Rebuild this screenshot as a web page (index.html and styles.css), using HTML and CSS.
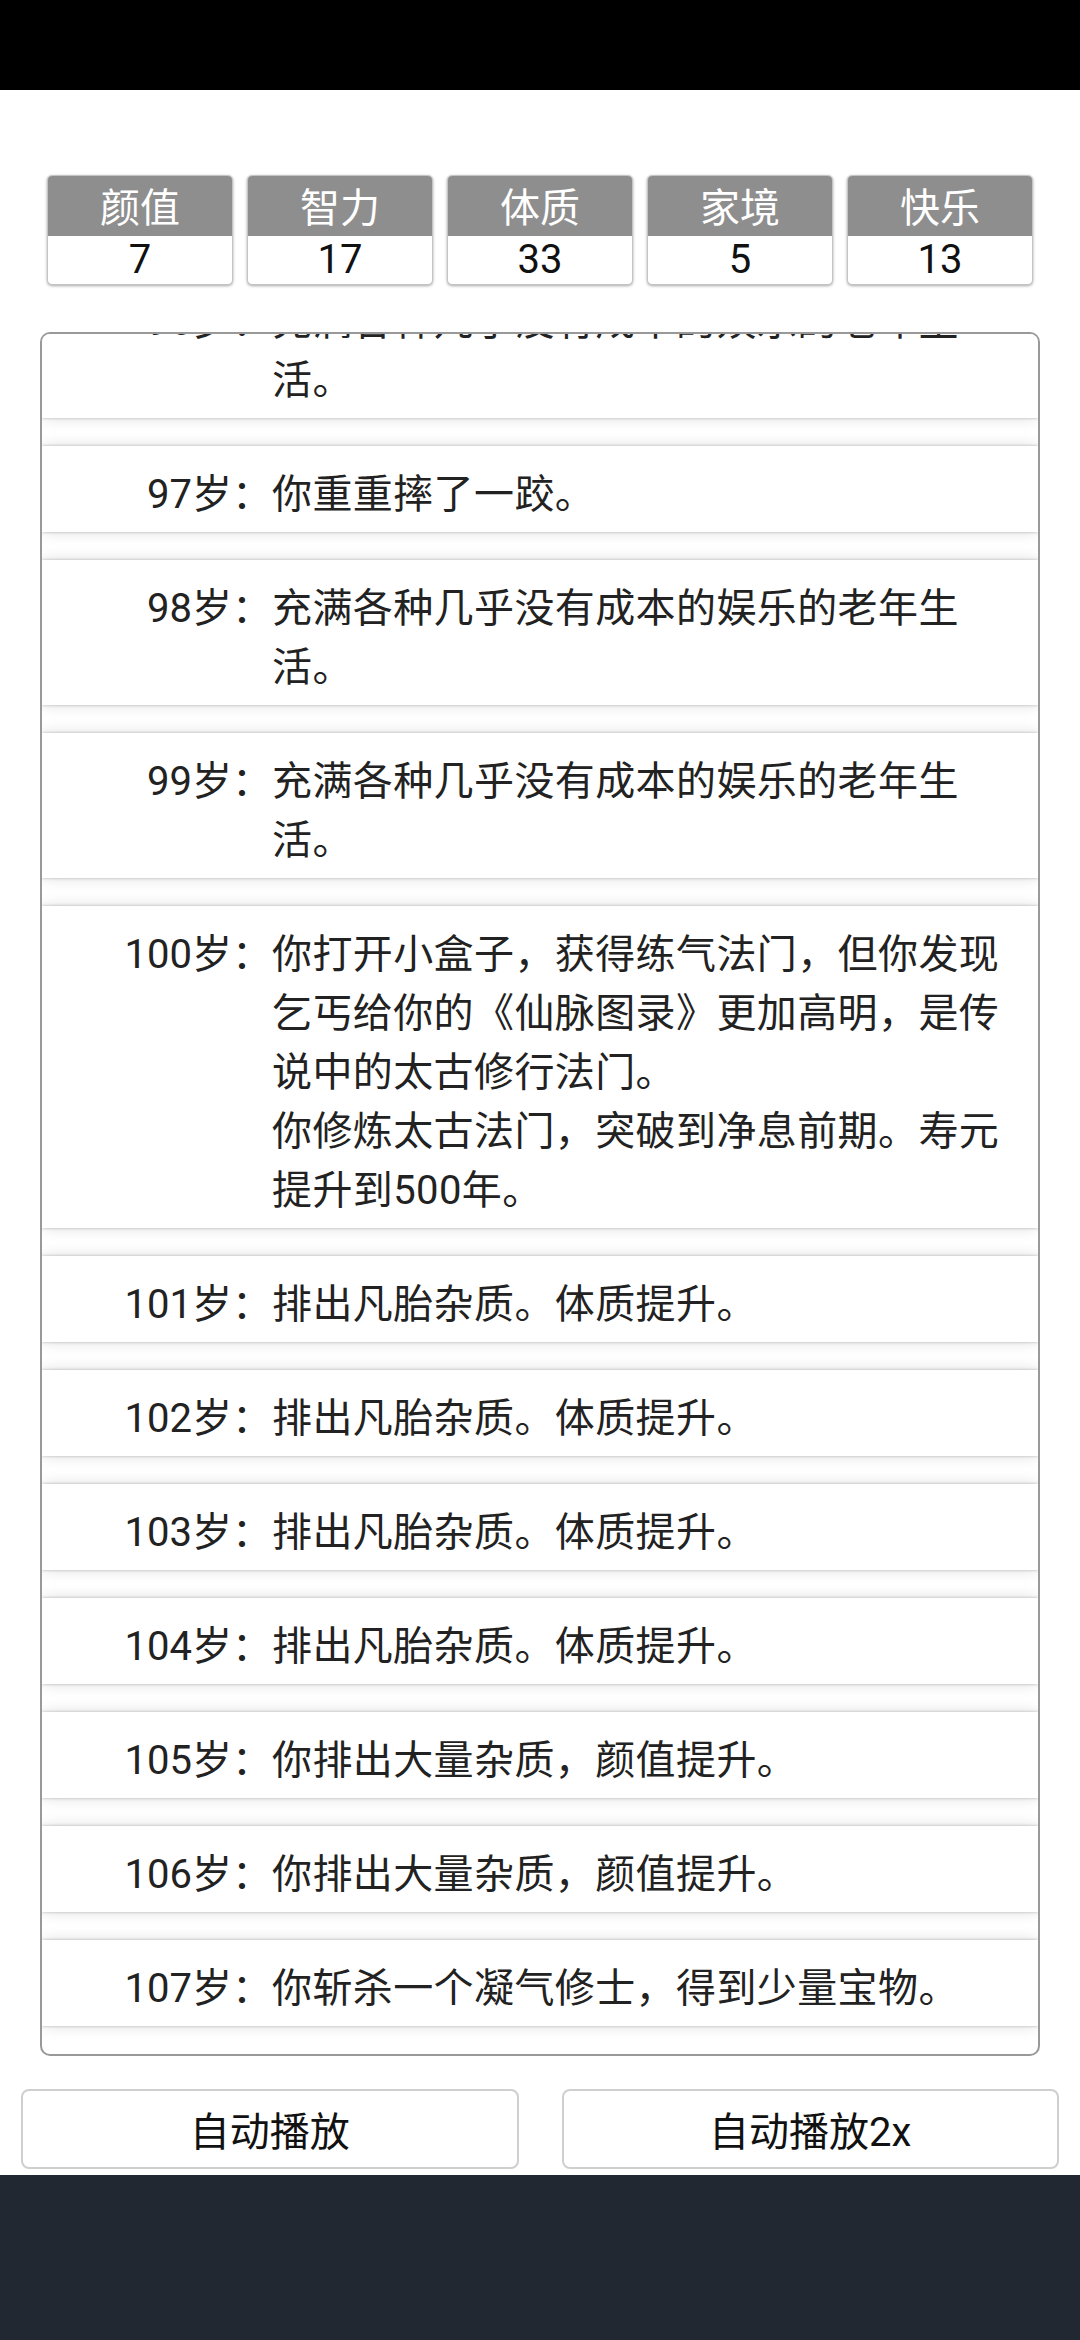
FILE: index.html
```html
<!DOCTYPE html>
<html lang="zh-CN">
<head>
<meta charset="utf-8">
<title>人生重开</title>
<link rel="stylesheet" href="styles.css">
</head>
<body>
<div class="statusbar"></div>
<main class="page">
  <section class="stats">
    <div class="stat"><div class="stat-name">颜值</div><div class="stat-val">7</div></div>
    <div class="stat"><div class="stat-name">智力</div><div class="stat-val">17</div></div>
    <div class="stat"><div class="stat-name">体质</div><div class="stat-val">33</div></div>
    <div class="stat"><div class="stat-name">家境</div><div class="stat-val">5</div></div>
    <div class="stat"><div class="stat-name">快乐</div><div class="stat-val">13</div></div>
  </section>
  <section class="log">
    <ul class="log-list">
      <li class="item"><span class="age">96岁：</span><span class="text">充满各种几乎没有成本的娱乐的老年生活。</span></li>
      <li class="item"><span class="age">97岁：</span><span class="text">你重重摔了一跤。</span></li>
      <li class="item"><span class="age">98岁：</span><span class="text">充满各种几乎没有成本的娱乐的老年生活。</span></li>
      <li class="item"><span class="age">99岁：</span><span class="text">充满各种几乎没有成本的娱乐的老年生活。</span></li>
      <li class="item"><span class="age">100岁：</span><span class="text">你打开小盒子，获得练气法门，但你发现乞丐给你的《仙脉图录》更加高明，是传说中的太古修行法门。<br>你修炼太古法门，突破到净息前期。寿元提升到500年。</span></li>
      <li class="item"><span class="age">101岁：</span><span class="text">排出凡胎杂质。体质提升。</span></li>
      <li class="item"><span class="age">102岁：</span><span class="text">排出凡胎杂质。体质提升。</span></li>
      <li class="item"><span class="age">103岁：</span><span class="text">排出凡胎杂质。体质提升。</span></li>
      <li class="item"><span class="age">104岁：</span><span class="text">排出凡胎杂质。体质提升。</span></li>
      <li class="item"><span class="age">105岁：</span><span class="text">你排出大量杂质，颜值提升。</span></li>
      <li class="item"><span class="age">106岁：</span><span class="text">你排出大量杂质，颜值提升。</span></li>
      <li class="item"><span class="age">107岁：</span><span class="text">你斩杀一个凝气修士，得到少量宝物。</span></li>
    </ul>
  </section>
  <section class="actions">
    <button class="btn">自动播放</button>
    <button class="btn">自动播放2x</button>
  </section>
</main>
<div class="navbar"></div>
</body>
</html>
```
FILE: styles.css
```css
* { box-sizing: border-box; }
html, body {
  margin: 0;
  padding: 0;
  background: #fff;
  font-family: Roboto, "Noto Sans CJK SC", sans-serif;
  color: #222;
}
body {
  width: 1080px;
  height: 2340px;
  overflow: hidden;
  display: flex;
  flex-direction: column;
}
.statusbar {
  height: 90px;
  background: #000;
  flex: 0 0 auto;
}
.page {
  flex: 1 1 auto;
  display: flex;
  flex-direction: column;
}
.stats {
  margin: 85px 0 0 47px;
  width: 986px;
  display: flex;
  gap: 14px;
}
.stat {
  flex: 1 1 0;
  border: 1px solid #c4c4c4;
  border-radius: 5px;
  overflow: hidden;
  box-shadow: 0 1px 3px rgba(0,0,0,0.35);
  background: #fff;
}
.stat-name {
  height: 60px;
  padding-top: 6px;
  background: #8e8e8e;
  color: #fff;
  font-size: 40px;
  line-height: 54px;
  text-align: center;
}
.stat-val {
  height: 48px;
  color: #111;
  font-size: 40px;
  line-height: 48px;
  text-align: center;
}
.log {
  margin: 47px 40px 0 40px;
  height: 1724px;
  border: 2px solid #999;
  border-radius: 10px;
  overflow: hidden;
  background: #fff;
}
.log-list {
  list-style: none;
  margin: -61px 0 0 0;
  padding: 0;
}
.item {
  display: flex;
  background: #fff;
  padding: 19px 0 8px 0;
  margin-bottom: 28px;
  font-size: 40px;
  line-height: 59px;
  box-shadow: 0 0 3px rgba(0,0,0,0.26), 0 0 14px rgba(0,0,0,0.13);
}
.age {
  flex: 0 0 230px;
  text-align: right;
  white-space: nowrap;
}
.text {
  flex: 1 1 auto;
  padding-right: 28px;
  letter-spacing: 0.4px;
}
.actions {
  margin: 33px 21px 0 21px;
  display: flex;
  gap: 43px;
}
.btn {
  flex: 1 1 0;
  height: 80px;
  background: #fff;
  border: 2px solid #cfcfcf;
  border-radius: 8px;
  font-family: Roboto, "Noto Sans CJK SC", sans-serif;
  font-size: 40px;
  color: #111;
  padding: 0;
}
.navbar {
  height: 165px;
  background: #222831;
  flex: 0 0 auto;
}
```
